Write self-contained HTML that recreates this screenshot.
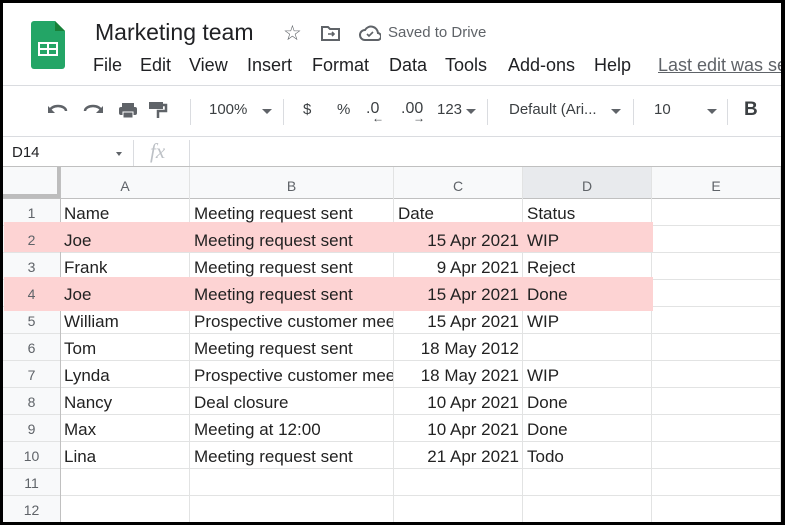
<!DOCTYPE html>
<html><head><style>
*{margin:0;padding:0;box-sizing:border-box}
body{width:785px;height:525px;background:#000;position:relative;overflow:hidden;font-family:"Liberation Sans",Arial,sans-serif}
#w{position:absolute;left:3px;top:3px;width:778px;height:519px;background:#fff;overflow:hidden}
.a{position:absolute;white-space:nowrap}
.ic{position:absolute}
.cell{position:absolute;font-size:17px;color:#222;white-space:nowrap;overflow:hidden}
.hl{position:absolute;background:#fdd3d3}
.vl{position:absolute;width:1px;background:#e2e3e3}
.hlne{position:absolute;height:1px;background:#e2e3e3}
.rh{position:absolute;left:0;width:57px;text-align:center;font-size:14px;color:#5f6368}
.ch{position:absolute;top:175px;font-size:14px;color:#5f6368;text-align:center}
.tri{position:absolute;width:0;height:0;border-left:5px solid transparent;border-right:5px solid transparent;border-top:5px solid #5f6368}
</style></head><body><div id="w">
<svg class="ic" style="left:28px;top:18px" width="34" height="48" viewBox="0 0 34 48"><path d="M3 0h21l10 10v35a3 3 0 0 1-3 3H3a3 3 0 0 1-3-3V3a3 3 0 0 1 3-3z" fill="#23a566"/><path d="M24 0v10h10z" fill="#188038"/><rect x="7" y="21" width="20" height="14" fill="#fff"/><rect x="9" y="23" width="7" height="4" fill="#23a566"/><rect x="18" y="23" width="7" height="4" fill="#23a566"/><rect x="9" y="29" width="7" height="4" fill="#23a566"/><rect x="18" y="29" width="7" height="4" fill="#23a566"/></svg>
<div class="a" style="left:92px;top:16px;font-size:23px;color:#202124">Marketing team</div>
<div class="a" style="left:280px;top:18px;font-size:21px;color:#5f6368">☆</div>
<svg class="ic" style="left:318px;top:22px" width="20" height="16" viewBox="0 0 20 16"><path d="M1 2h6l2 2h9v11H1z" fill="none" stroke="#5f6368" stroke-width="2"/><path d="M7 9h6M11 7l2 2-2 2" stroke="#5f6368" stroke-width="1.6" fill="none"/></svg>
<svg class="ic" style="left:356px;top:22px" width="22" height="16" viewBox="0 0 22 16"><path d="M6 15a5 5 0 0 1 0-10 7 7 0 0 1 13 3 3.5 3.5 0 0 1-1 7z" fill="none" stroke="#5f6368" stroke-width="2"/><path d="M8 9l2 2 4-4" stroke="#5f6368" stroke-width="1.6" fill="none"/></svg>
<div class="a" style="left:385px;top:21px;font-size:15px;color:#5f6368">Saved to Drive</div>
<div class="a" style="top:52px;font-size:18px;color:#202124;left:90px">File</div>
<div class="a" style="top:52px;font-size:18px;color:#202124;left:137px">Edit</div>
<div class="a" style="top:52px;font-size:18px;color:#202124;left:186px">View</div>
<div class="a" style="top:52px;font-size:18px;color:#202124;left:244px">Insert</div>
<div class="a" style="top:52px;font-size:18px;color:#202124;left:309px">Format</div>
<div class="a" style="top:52px;font-size:18px;color:#202124;left:386px">Data</div>
<div class="a" style="top:52px;font-size:18px;color:#202124;left:442px">Tools</div>
<div class="a" style="top:52px;font-size:18px;color:#202124;left:505px">Add-ons</div>
<div class="a" style="top:52px;font-size:18px;color:#202124;left:591px">Help</div>
<div class="a" style="top:52px;font-size:18px;color:#5f6368;left:655px;text-decoration:underline">Last edit was seconds ago</div>
<div class="hlne" style="left:0;top:82px;width:778px;background:#dadce0"></div>
<svg class="ic" style="left:44px;top:98px" width="130" height="18" viewBox="0 0 130 18"><path d="M3 10a8 5 0 0 1 16 0" fill="none" stroke="#5f6368" stroke-width="2.5"/><path d="M1 5v7h7z" fill="#5f6368"/><path d="M54 10a8 5 0 0 0-16 0" fill="none" stroke="#5f6368" stroke-width="2.5"/><path d="M56 5v7h-7z" fill="#5f6368"/><rect x="75" y="2" width="12" height="4" fill="#5f6368"/><rect x="72" y="6" width="18" height="8" rx="2" fill="#5f6368"/><rect x="76" y="11" width="10" height="6" fill="#5f6368" stroke="#fff" stroke-width="1"/><rect x="102" y="1" width="14" height="7" fill="#5f6368"/><path d="M116 4h3v6h-8v7" fill="none" stroke="#5f6368" stroke-width="2.5"/></svg>
<div class="vl" style="left:187px;top:96px;height:26px;background:#dadce0"></div>
<div class="a" style="left:206px;top:98px;font-size:15px;color:#3c4043">100%</div>
<div class="tri" style="left:259px;top:106px"></div>
<div class="vl" style="left:280px;top:96px;height:26px;background:#dadce0"></div>
<div class="a" style="left:300px;top:98px;font-size:15px;color:#3c4043">$</div>
<div class="a" style="left:334px;top:98px;font-size:15px;color:#3c4043">%</div>
<div class="a" style="left:363px;top:97px;font-size:16px;color:#3c4043">.0</div>
<div class="a" style="left:369px;top:108px;font-size:12px;color:#3c4043">←</div>
<div class="a" style="left:398px;top:97px;font-size:16px;color:#3c4043">.00</div>
<div class="a" style="left:410px;top:108px;font-size:12px;color:#3c4043">→</div>
<div class="a" style="left:434px;top:98px;font-size:15px;color:#3c4043">123</div>
<div class="tri" style="left:463px;top:106px"></div>
<div class="vl" style="left:484px;top:96px;height:26px;background:#dadce0"></div>
<div class="a" style="left:506px;top:98px;font-size:15px;color:#3c4043">Default (Ari...</div>
<div class="tri" style="left:608px;top:106px"></div>
<div class="vl" style="left:630px;top:96px;height:26px;background:#dadce0"></div>
<div class="a" style="left:651px;top:98px;font-size:15px;color:#3c4043">10</div>
<div class="tri" style="left:704px;top:106px"></div>
<div class="vl" style="left:724px;top:96px;height:26px;background:#dadce0"></div>
<div class="a" style="left:741px;top:96px;font-size:19px;font-weight:bold;color:#3c4043">B</div>
<div class="hlne" style="left:0;top:133px;width:778px;background:#dadce0"></div>
<div class="a" style="left:9px;top:141px;font-size:15px;color:#202124">D14</div>
<div class="tri" style="left:113px;top:149px;border-left-width:3px;border-right-width:3px;border-top-width:4px"></div>
<div class="vl" style="left:130px;top:137px;height:26px;background:#dadce0"></div>
<div class="a" style="left:147px;top:136px;font-size:21px;font-style:italic;font-family:'Liberation Serif',serif;color:#bdc1c6">fx</div>
<div class="vl" style="left:186px;top:137px;height:26px;background:#dadce0"></div>
<div class="hlne" style="left:0;top:163px;width:778px;background:#c0c0c0"></div>
<div style="position:absolute;left:0;top:164px;width:778px;height:31px;background:#f8f9fa"></div>
<div style="position:absolute;left:520px;top:164px;width:128px;height:31px;background:#e8eaed"></div>
<div style="position:absolute;left:0;top:164px;width:57px;height:360px;background:#f8f9fa"></div>
<div style="position:absolute;left:54px;top:164px;width:4px;height:31px;background:#bdbdbd"></div>
<div style="position:absolute;left:0;top:191px;width:58px;height:4px;background:#bdbdbd"></div>
<div class="hlne" style="left:0;top:195px;width:778px;background:#c0c0c0"></div>
<div class="ch" style="left:58px;width:128px">A</div>
<div class="ch" style="left:187px;width:203px">B</div>
<div class="ch" style="left:391px;width:128px">C</div>
<div class="ch" style="left:520px;width:128px">D</div>
<div class="ch" style="left:649px;width:128px">E</div>
<div class="hlne" style="left:0;top:222px;width:778px"></div>
<div class="hlne" style="left:0;top:249px;width:778px"></div>
<div class="hlne" style="left:0;top:276px;width:778px"></div>
<div class="hlne" style="left:0;top:303px;width:778px"></div>
<div class="hlne" style="left:0;top:330px;width:778px"></div>
<div class="hlne" style="left:0;top:357px;width:778px"></div>
<div class="hlne" style="left:0;top:384px;width:778px"></div>
<div class="hlne" style="left:0;top:411px;width:778px"></div>
<div class="hlne" style="left:0;top:438px;width:778px"></div>
<div class="hlne" style="left:0;top:465px;width:778px"></div>
<div class="hlne" style="left:0;top:492px;width:778px"></div>
<div class="vl" style="left:57px;top:164px;height:360px;background:#c0c0c0"></div>
<div class="vl" style="left:186px;top:164px;height:360px"></div>
<div class="vl" style="left:390px;top:164px;height:360px"></div>
<div class="vl" style="left:519px;top:164px;height:360px"></div>
<div class="vl" style="left:648px;top:164px;height:360px"></div>
<div class="vl" style="left:777px;top:164px;height:360px"></div>
<div class="hl" style="left:1px;top:219px;width:649px;height:30px"></div>
<div class="hl" style="left:1px;top:274px;width:649px;height:34px"></div>
<div class="rh" style="top:202px">1</div><div class="rh" style="top:229px">2</div><div class="rh" style="top:256px">3</div><div class="rh" style="top:283px">4</div><div class="rh" style="top:310px">5</div><div class="rh" style="top:337px">6</div><div class="rh" style="top:364px">7</div><div class="rh" style="top:391px">8</div><div class="rh" style="top:418px">9</div><div class="rh" style="top:445px">10</div><div class="rh" style="top:472px">11</div><div class="rh" style="top:499px">12</div>
<div class="cell" style="left:61px;top:201px">Name</div><div class="cell" style="left:191px;top:201px;width:198px">Meeting request sent</div><div class="cell" style="left:395px;top:201px">Date</div><div class="cell" style="left:524px;top:201px">Status</div>
<div class="cell" style="left:61px;top:228px">Joe</div><div class="cell" style="left:191px;top:228px;width:198px">Meeting request sent</div><div class="cell" style="left:392px;top:228px;width:124px;text-align:right">15 Apr 2021</div><div class="cell" style="left:524px;top:228px">WIP</div>
<div class="cell" style="left:61px;top:255px">Frank</div><div class="cell" style="left:191px;top:255px;width:198px">Meeting request sent</div><div class="cell" style="left:392px;top:255px;width:124px;text-align:right">9 Apr 2021</div><div class="cell" style="left:524px;top:255px">Reject</div>
<div class="cell" style="left:61px;top:282px">Joe</div><div class="cell" style="left:191px;top:282px;width:198px">Meeting request sent</div><div class="cell" style="left:392px;top:282px;width:124px;text-align:right">15 Apr 2021</div><div class="cell" style="left:524px;top:282px">Done</div>
<div class="cell" style="left:61px;top:309px">William</div><div class="cell" style="left:191px;top:309px;width:199px">Prospective customer meeting</div><div class="cell" style="left:392px;top:309px;width:124px;text-align:right">15 Apr 2021</div><div class="cell" style="left:524px;top:309px">WIP</div>
<div class="cell" style="left:61px;top:336px">Tom</div><div class="cell" style="left:191px;top:336px;width:198px">Meeting request sent</div><div class="cell" style="left:392px;top:336px;width:124px;text-align:right">18 May 2012</div>
<div class="cell" style="left:61px;top:363px">Lynda</div><div class="cell" style="left:191px;top:363px;width:199px">Prospective customer meeting</div><div class="cell" style="left:392px;top:363px;width:124px;text-align:right">18 May 2021</div><div class="cell" style="left:524px;top:363px">WIP</div>
<div class="cell" style="left:61px;top:390px">Nancy</div><div class="cell" style="left:191px;top:390px">Deal closure</div><div class="cell" style="left:392px;top:390px;width:124px;text-align:right">10 Apr 2021</div><div class="cell" style="left:524px;top:390px">Done</div>
<div class="cell" style="left:61px;top:417px">Max</div><div class="cell" style="left:191px;top:417px">Meeting at 12:00</div><div class="cell" style="left:392px;top:417px;width:124px;text-align:right">10 Apr 2021</div><div class="cell" style="left:524px;top:417px">Done</div>
<div class="cell" style="left:61px;top:444px">Lina</div><div class="cell" style="left:191px;top:444px;width:198px">Meeting request sent</div><div class="cell" style="left:392px;top:444px;width:124px;text-align:right">21 Apr 2021</div><div class="cell" style="left:524px;top:444px">Todo</div>
</div></body></html>
